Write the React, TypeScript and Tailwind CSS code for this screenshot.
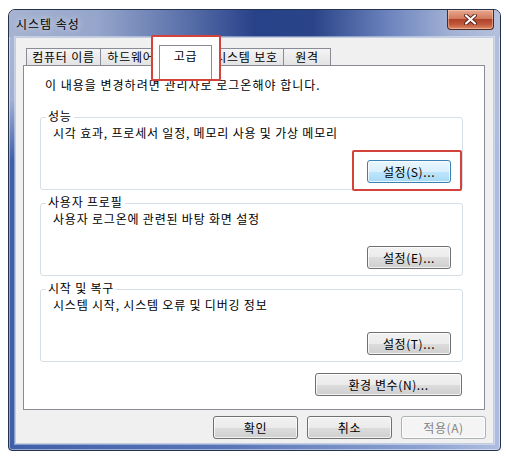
import React from 'react';

type Kind = 'normal' | 'focus' | 'disabled';

const kinds: Record<Kind, string> = {
  normal:
    'border-[#707070] bg-[linear-gradient(180deg,#f2f2f2_0%,#ebebeb_50%,#dddddd_50%,#cfcfcf_100%)] text-black',
  focus:
    'border-[#3c7fb1] bg-[linear-gradient(180deg,#eaf6fd_0%,#d9f0fc_50%,#bee6fd_50%,#a7d9f5_100%)] text-black',
  disabled: 'border-[#adb2b5] bg-[#f4f4f4] text-[#838383]',
};

function WinButton({ label, kind = 'normal', width }: { label: string; kind?: Kind; width: string }) {
  return (
    <button
      type="button"
      className={`flex h-[23px] items-center justify-center rounded-[3px] border text-[12px] leading-[14px] tracking-[0.6px] shadow-[inset_0_0_0_1px_rgba(255,255,255,0.75)] ${kinds[kind]} ${width}`}
    >
      {label}
    </button>
  );
}

function Group({ title, desc, btn, kind = 'normal' }: { title: string; desc: string; btn: string; kind?: Kind }) {
  return (
    <div className="relative flex h-[73px] flex-col rounded-[3px] border border-[#d5dfe5]">
      {/* label sits on the top border line */}
      <span className="absolute -top-[9px] left-[5px] bg-white px-[2px] leading-[14px]">{title}</span>
      <p className="mt-[8px] pl-[12px] leading-[14px]">{desc}</p>
      <div className="mt-auto mb-[6px] mr-[11px] flex justify-end">
        <WinButton label={btn} kind={kind} width="w-[84px]" />
      </div>
    </div>
  );
}

const tabs = [
  { label: '컴퓨터 이름', cls: 'w-[75px]' },
  { label: '하드웨어', cls: 'w-[62px] -ml-px' },
  { label: '고급', cls: 'w-[53px] -ml-[3px]', active: true },
  { label: '시스템 보호', cls: 'w-[75px] -ml-[3px]' },
  { label: '원격', cls: 'w-[48px] -ml-px' },
];

export default function App() {
  return (
    <div className="relative h-[461px] w-[506px] overflow-hidden bg-white pl-[8px] pt-[9px] font-['Noto_Sans_CJK_KR','Noto_Sans',sans-serif] text-[12px] leading-[14px] tracking-[0.8px] text-black">
      {/* Window */}
      <div className="flex h-[442px] w-[493px] flex-col rounded-t-[7px] rounded-b-[4px] border border-[#24324b] bg-[linear-gradient(180deg,rgba(178,190,218,0.95)_0px,rgba(178,190,218,0.85)_90px,rgba(178,190,218,0)_150px),linear-gradient(90deg,#3f5fa9_0%,#5a76b8_45%,#8ea3d2_85%,#aebde0_100%)] shadow-[inset_0_0_0_1px_rgba(255,255,255,0.45)]">
        {/* Title bar */}
        <div className="flex h-[27px] items-start rounded-t-[6px] bg-[linear-gradient(90deg,#a6b3d1_0%,#95a5cb_18%,#5a70aa_36%,#28428a_50%,#2a4488_62%,#6f86bf_78%,#a2b1d4_90%,#b6c1dc_100%)] pr-[6px]">
          <span className="mt-[7px] ml-[7px] leading-[14px] tracking-[1px] [text-shadow:0_0_6px_rgba(255,255,255,0.9)]">
            시스템 속성
          </span>
          <div className="ml-auto flex h-[20px] w-[47px] items-center justify-center rounded-b-[4px] border border-t-0 border-[#4d2a22] bg-[linear-gradient(180deg,#e9a78f_0%,#d27c5f_45%,#b0432a_50%,#c0573a_75%,#dd8b67_100%)] shadow-[inset_0_0_0_1px_rgba(255,220,200,0.45)]">
            <svg width="13" height="11" viewBox="0 0 13 11">
              <path d="M2 1.5 L11 9.5 M11 1.5 L2 9.5" stroke="#5a2418" strokeWidth="4" strokeLinecap="round" />
              <path d="M2 1.5 L11 9.5 M11 1.5 L2 9.5" stroke="#ffffff" strokeWidth="2.2" strokeLinecap="round" />
            </svg>
          </div>
        </div>

        {/* Client area */}
        <div className="mx-[6px] flex h-[407px] flex-col border border-[#c3cde2] bg-[#f0f0f0] pt-[7px] shadow-[0_0_0_1px_rgba(255,255,255,0.4)]">
          {/* Tabs */}
          <div className="flex h-[20px] items-end pl-[10px]">
            {tabs.map((t) =>
              t.active ? (
                <div
                  key={t.label}
                  className={`relative z-10 -mb-px flex h-[21px] items-start justify-center border border-b-0 border-[#898c95] bg-white pt-[3px] ${t.cls}`}
                >
                  {t.label}
                </div>
              ) : (
                <div
                  key={t.label}
                  className={`flex h-[17px] items-center justify-center border border-b-0 border-[#898c95] bg-[linear-gradient(180deg,#f4f4f4,#e3e3e3)] ${t.cls}`}
                >
                  {t.label}
                </div>
              )
            )}
          </div>

          {/* Tab panel */}
          <div className="ml-[7px] flex h-[345px] w-[462px] flex-col border border-[#898c95] bg-white pl-[16px] pr-[21px]">
            <p className="mt-[12px] ml-[5px] leading-[14px] tracking-[1px]">이 내용을 변경하려면 관리자로 로그온해야 합니다.</p>
            <div className="mt-[25px] flex flex-col gap-[13px]">
              <Group title="성능" desc="시각 효과, 프로세서 일정, 메모리 사용 및 가상 메모리" btn="설정(S)..." kind="focus" />
              <Group title="사용자 프로필" desc="사용자 로그온에 관련된 바탕 화면 설정" btn="설정(E)..." />
              <Group title="시작 및 복구" desc="시스템 시작, 시스템 오류 및 디버깅 정보" btn="설정(T)..." />
            </div>
            <div className="mt-[11px] mr-[1px] flex justify-end">
              <WinButton label="환경 변수(N)..." width="w-[147px]" />
            </div>
          </div>

          {/* Dialog buttons */}
          <div className="mt-[6px] flex justify-end gap-[9px] pr-[7px]">
            <WinButton label="확인" width="w-[85px]" />
            <WinButton label="취소" width="w-[85px]" />
            <WinButton label="적용(A)" kind="disabled" width="w-[85px]" />
          </div>
        </div>
      </div>

      {/* Red callout over the 고급 tab */}
      <div className="absolute left-[151px] top-[35px] h-[46px] w-[70px] rounded-[2px] border-2 border-[#d4433b] bg-white">
        <div className="ml-[6px] mt-[8px] flex h-[34px] w-[53px] justify-center border border-b-0 border-[#898c95] bg-white pt-[3px]">
          고급
        </div>
      </div>

      {/* Red highlight around 설정(S) */}
      <div className="absolute left-[352px] top-[150px] h-[41px] w-[110px] rounded-[2px] border-2 border-[#d4433b]" />
    </div>
  );
}
